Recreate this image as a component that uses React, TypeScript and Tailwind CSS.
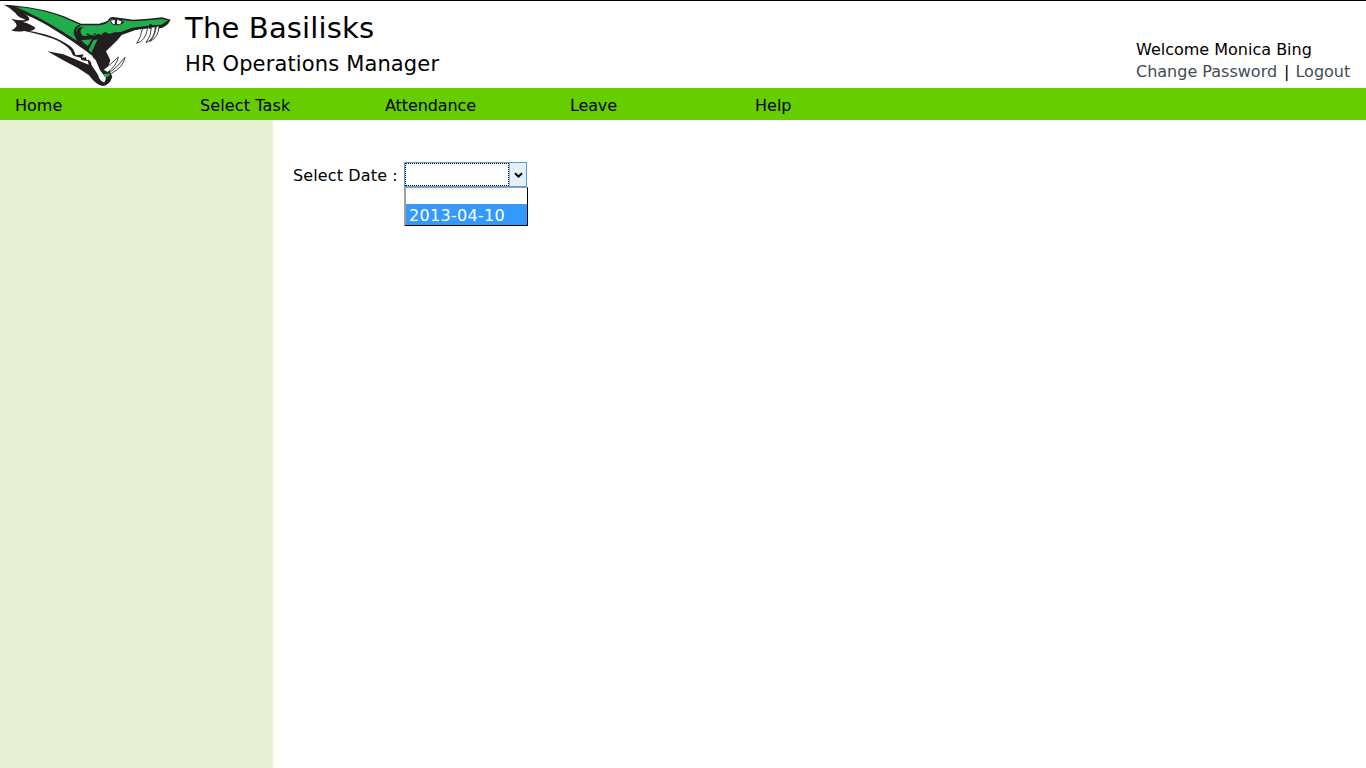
const menu = [
  { label: 'Home', tracking: '' },
  { label: 'Select Task', tracking: 'tracking-[0.13px]' },
  { label: 'Attendance', tracking: 'tracking-[-0.1px]' },
  { label: 'Leave', tracking: 'tracking-[-0.15px]' },
  { label: 'Help', tracking: '' },
];

function Logo() {
  return (
    <svg className="block h-[87px] w-[175px] shrink-0" viewBox="0 3 525 261" aria-hidden="true">
      <path fill="#231f20" d="M12 14 C75 17 150 31 192 49 L243 71 H298 C308 68 322 66 326 58 Q329 51 338 51 L368 55 L399 59 L445 56 L486 52 L512 59 Q506 73 493 80 L455 82 L404 91 L365 105 L352 121 L318 154 L331 181 L324 202 L337 230 Q329 256 308 258 Q289 256 267 226 L234 204 L198 185 L142 154 L190 163 L244 185 L268 195 L278 168 L235 139 C185 105 122 66 69 42 Z" />
      <path fill="#fff" d="M48 29 L81 62 L62 66 L105 87 L72 91 C141 100 192 118 218 148 L228 166 L248 163 L244 174 L258 172 L260 184 L272 192 L293 223 Q302 250 314 246 L318 234 L300 211 L287 180 L263 157 C205 113 116 56 70 42Z" />
      <path fill="#231f20" d="M12 14 Q30 22 47 40 Q53 52 70 56 L77 60 Q57 62 33 56 Q49 66 50 77 Q47 85 33 91 Q49 97 73 93 C140 107 190 122 213 153 Q216 165 222 168 L242 173 L244 180 L264 184 L267 202 L276 207 L273 187 L266 179 L260 181 L258 172 L246 173 L251 163 L227 166 Q221 146 211 139 C176 113 126 98 87 93 Q103 92 106 83 Q92 72 69 66 Q81 64 88 59 Q88 50 75 43 L41 25Z" />
      <path fill="#20ad4b" d="M48 22 C96 23 159 39 193 54 L240 74 Q219 79 221 101 L231 123 C180 89 112 47 48 22Z" />
      <path fill="#20ad4b" d="M235 84 L242 76 H299 Q323 73 332 57 L370 61 L399 64 L446 61 L484 57 L505 61 L484 74 L455 76 L397 83 L362 96 L344 97 L326 102 L316 97 L304 105 L295 101 L284 107 L271 104 L258 108 L243 107 L229 94 Q228 86 239 78Z" />
      <path fill="#20ad4b" d="M243 121 L276 118 L263 138Z M280 121 L293 118 L274 158 L266 150Z" />
      <path fill="#231f20" d="M250 81 Q226 79 232 101 L253 119 L246 105 Q235 91 250 81Z M258 104 l6-5 5 7Z M279 103 l6-4 5 7Z M304 102 l12-6 11 6Z" />
      <path fill="#fff" stroke="#231f20" strokeWidth="3" d="M330 61 Q347 54 365 62 L371 67 L358 74 H339Z" />
      <path fill="#231f20" d="M345 58 H351 V73 H344Z M364 62 L373 67 L363 72Z M447 73 H456 V86 H447Z M462 78 l10 5 8-6 16-3-8 9-30 5Z" />
      <g fill="#fff" stroke="#231f20" strokeWidth="2.5" strokeLinejoin="round">
        <path d="M427 87 Q423 112 410 130 Q437 123 443 84Z" />
        <path d="M454 82 Q455 107 438 128 Q464 118 466 80Z" />
        <path d="M469 79 Q466 107 449 125 Q477 111 477 78Z" />
        <path d="M309 210 Q333 192 355 171 Q350 197 323 217Z" />
        <path d="M327 219 Q353 202 375 172 Q370 202 334 220Z" />
      </g>
      <path fill="#20ad4b" d="M309 223 Q322 219 330 221 Q327 231 317 232Z" />
    </svg>
  );
}

export default function App() {
  return (
    <div className="flex h-screen w-full flex-col overflow-hidden border-t border-black bg-white font-['Verdana','DejaVu_Sans',sans-serif] text-[16px] leading-[22px] text-black">
      <header className="flex h-[87px] shrink-0 justify-between">
        <div className="flex">
          <Logo />
          <div className="pl-[10px] pt-[9px]">
            <h1 className="text-[29px] leading-[36px] tracking-[0.17px]">The Basilisks</h1>
            <h2 className="text-[21px] leading-[36px] tracking-[0.14px]">HR Operations Manager</h2>
          </div>
        </div>
        <div className="mr-[15px] w-[215px] whitespace-nowrap pt-[38px]">
          <p>Welcome Monica Bing</p>
          <p><a className="text-[#444b55]">Change Password</a><span className="pl-[7px] pr-[6px]">|</span><a className="text-[#444b55]">Logout</a></p>
        </div>
      </header>
      <nav className="flex h-8 shrink-0 items-center bg-[#66ce00] pl-[15px] pt-[3px]">
        {menu.map(item => <a key={item.label} className={`w-[185px] ${item.tracking}`}>{item.label}</a>)}
      </nav>
      <div className="flex min-h-0 grow">
        <aside className="w-[273px] shrink-0 bg-[#e7f0d3]" />
        <main className="flex items-start pl-5 pt-[42px]">
          <label className="w-[111px] whitespace-nowrap pt-[3px] tracking-[0.13px]">Select Date :</label>
          <div className="w-[124px]">
            <div className="flex h-[25px] w-[123px] border border-[#569de5]">
              <div className="grow border border-dotted border-black" />
              <div className="flex w-[17px] items-center justify-center border-l border-[#7eb4ea] bg-[#e5f0fb] pt-px">
                <svg className="h-[7px] w-[9px]" viewBox="0 0 9 7"><path d="M1 1.2 L4.5 4.7 L8 1.2" fill="none" stroke="#000" strokeWidth="2" /></svg>
              </div>
            </div>
            <div className="h-[39px] border border-l-2 border-black border-l-[#a0a0a0] border-t-[#a0a0a0] bg-white">
              <div className="h-4" />
              <div className="h-[21px] bg-[#3399ff] pl-[3px] leading-[23px] tracking-[0.3px] text-white">2013-04-10</div>
            </div>
          </div>
        </main>
      </div>
    </div>
  );
}
